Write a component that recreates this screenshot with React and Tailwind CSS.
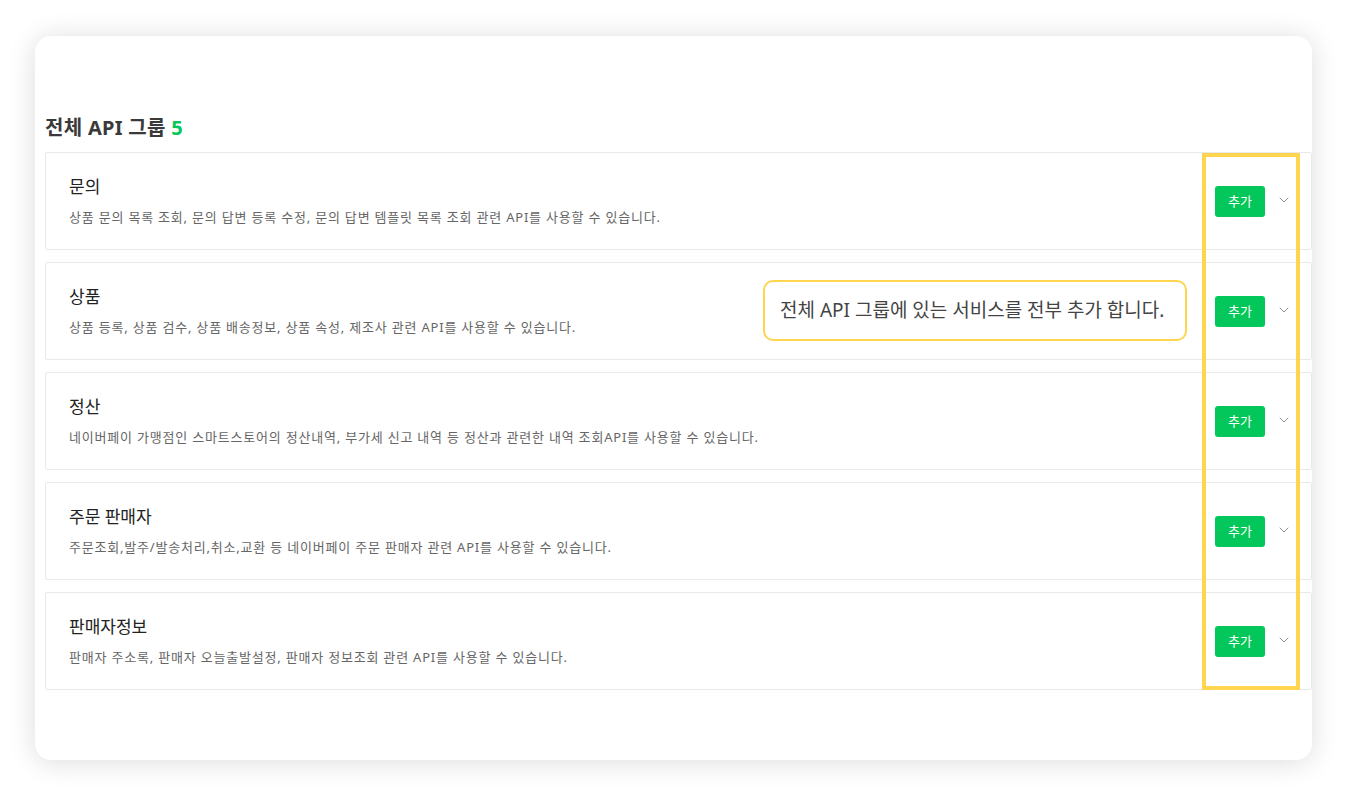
import React from 'react';
import { ChevronDown } from 'lucide-react';

const groups = [
  { name: '문의', desc: '상품 문의 목록 조회, 문의 답변 등록 수정, 문의 답변 템플릿 목록 조회 관련 API를 사용할 수 있습니다.' },
  { name: '상품', desc: '상품 등록, 상품 검수, 상품 배송정보, 상품 속성, 제조사 관련 API를 사용할 수 있습니다.' },
  { name: '정산', desc: '네이버페이 가맹점인 스마트스토어의 정산내역, 부가세 신고 내역 등 정산과 관련한 내역 조회API를 사용할 수 있습니다.' },
  { name: '주문 판매자', desc: '주문조회,발주/발송처리,취소,교환 등 네이버페이 주문 판매자 관련 API를 사용할 수 있습니다.' },
  { name: '판매자정보', desc: '판매자 주소록, 판매자 오늘출발설정, 판매자 정보조회 관련 API를 사용할 수 있습니다.' },
];

export default function App() {
  return (
    <div
      className="min-h-[795px] w-[1347px] bg-white pt-[36px] pl-[35px]"
      style={{ fontFamily: '"Noto Sans", "Noto Sans CJK KR", sans-serif' }}
    >
      <div className="relative w-[1277px] h-[724px] rounded-[16px] bg-white shadow-[0_2px_28px_rgba(0,0,0,0.14)] pl-[10px] pt-[80px]">
        <h2 className="text-[20px] leading-[24px] font-bold text-[#3a3a3a] mb-[12px] tracking-[0.3px]">
          전체 API 그룹 <span className="text-[#03c75a]">5</span>
        </h2>

        <div className="flex flex-col gap-[12px]">
          {groups.map((g) => (
            <div
              key={g.name}
              className="flex items-center justify-between h-[98px] border border-[#e9e9e9] rounded-[2px] pl-[23px] pr-[19px] bg-white"
            >
              <div className="flex flex-col">
                <div className="text-[17px] leading-[22px] text-[#222]">{g.name}</div>
                <div className="mt-[10px] text-[13px] leading-[18px] text-[#666] tracking-[0.8px]">{g.desc}</div>
              </div>
              <div className="flex items-center gap-[11px]">
                <button className="w-[50px] h-[31px] rounded-[3px] bg-[#03c75a] text-white text-[13px] leading-none">
                  추가
                </button>
                <ChevronDown size={16} strokeWidth={1.4} className="text-[#888] -mt-[2px]" />
              </div>
            </div>
          ))}
        </div>

        <div className="absolute left-[1167px] top-[117px] w-[98px] h-[537px] border-[4px] border-[#ffd54f] pointer-events-none" />

        <div className="absolute left-[728px] top-[244px] w-[424px] h-[61px] rounded-[10px] border-2 border-[#ffd54f] bg-white flex items-center pl-[15px]">
          <span className="text-[19px] text-[#444]">전체 API 그룹에 있는 서비스를 전부 추가 합니다.</span>
        </div>
      </div>
    </div>
  );
}
